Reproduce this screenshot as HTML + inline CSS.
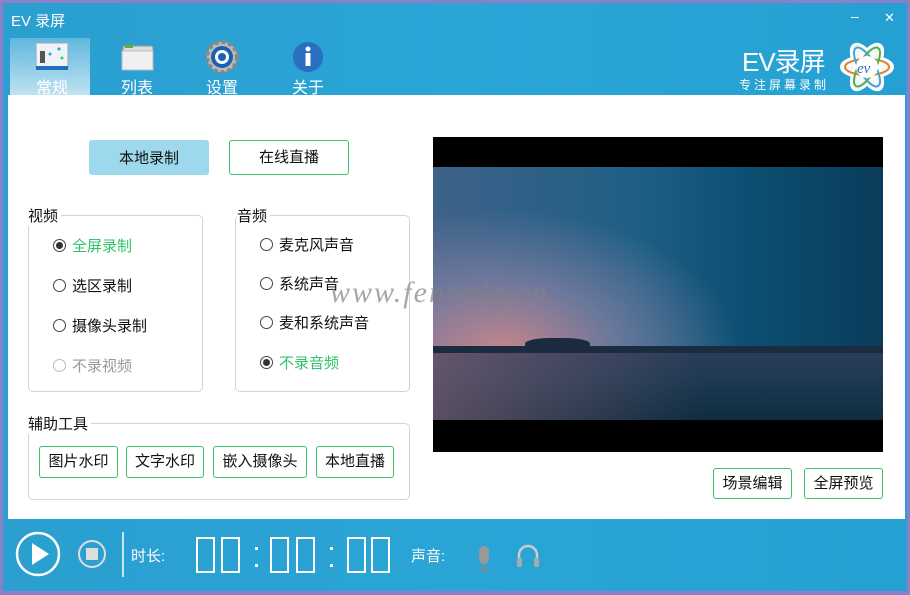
<!DOCTYPE html>
<html><head><meta charset="utf-8"><style>
*{margin:0;padding:0;box-sizing:border-box}
body{width:910px;height:595px;overflow:hidden;background:#8b7fc9;font-family:"Liberation Sans","Noto Sans CJK SC",sans-serif;position:relative}
.frame{position:absolute;left:3px;top:3px;width:904px;height:588px;background:linear-gradient(90deg,#2a9fd0,#2aa5d6 50%,#25a0d2)}
.abs{position:absolute}
.white{position:absolute;left:8px;top:95px;width:897px;height:424px;background:#fff}
.t{color:#fff}
.tab{position:absolute;top:38px;width:80px;height:57px;text-align:center;color:#fff;font-size:16px}
.tab span{position:absolute;left:0;right:0;top:36px}
.btn{position:absolute;border:1px solid #3cc36a;border-radius:3px;background:#fff;font-size:15px;text-align:center;color:#111}
.grp{position:absolute;border:1px solid #d4d4d4;border-radius:5px}
.lbl{position:absolute;background:#fff;font-size:15px;color:#111;padding-right:3px}
.rad{position:absolute;font-size:15px;color:#111;padding-left:19px}
.rad:before{content:"";position:absolute;left:0;top:4px;width:11px;height:11px;border:1px solid #444;border-radius:50%;background:#fff}
.rad.on:after{content:"";position:absolute;left:3px;top:7px;width:7px;height:7px;border-radius:50%;background:#333}
.g{color:#2fc46a}.d{color:#999}.d:before{border-color:#bbb}
</style></head><body>
<div class="frame"></div>
<div class="abs t" style="left:11px;top:10px;font-size:15px">EV 录屏</div>
<div class="abs t" style="left:851px;top:8px;font-size:14px">–</div>
<div class="abs t" style="left:884px;top:10px;font-size:13px">✕</div>
<div class="abs" style="left:10px;top:38px;width:80px;height:57px;background:linear-gradient(180deg,rgba(255,255,255,.25),rgba(255,255,255,.7))"></div>
<div class="tab" style="left:12px"><svg width="36" height="32" style="margin-top:3px"><rect x="2" y="2" width="32" height="25" fill="#eef3f6" stroke="#9ab" /><rect x="2" y="25" width="32" height="4" fill="#1f6fc0"/><rect x="6" y="10" width="5" height="12" fill="#555"/><circle cx="25" cy="8" r="1.5" fill="#39c"/><circle cx="16" cy="13" r="1.5" fill="#39c"/><circle cx="28" cy="17" r="1.5" fill="#3c6"/></svg><span>常规</span></div>
<div class="tab" style="left:97px"><svg width="36" height="32" style="margin-top:3px"><rect x="4" y="5" width="30" height="24" rx="2" fill="#ddd" stroke="#999"/><rect x="6" y="4" width="8" height="3" fill="#6a3"/><rect x="3" y="10" width="31" height="19" fill="#f0f0f0" stroke="#bbb"/></svg><span>列表</span></div>
<div class="tab" style="left:182px"><svg width="36" height="34" style="margin-top:2px"><circle cx="18" cy="17" r="15" fill="#bbb" stroke="#888" stroke-width="4" stroke-dasharray="4 3"/><circle cx="18" cy="17" r="11" fill="#1d5fb0"/><circle cx="18" cy="17" r="7" fill="#fff"/><circle cx="18" cy="17" r="4" fill="#1d5fb0"/></svg><span>设置</span></div>
<div class="tab" style="left:268px"><svg width="36" height="34" style="margin-top:2px"><circle cx="18" cy="17" r="15" fill="#2a6fc0"/><circle cx="18" cy="9" r="2.5" fill="#fff"/><rect x="15.5" y="13" width="5" height="13" fill="#fff"/></svg><span>关于</span></div>
<div class="abs t" style="left:742px;top:42px;font-size:26px;letter-spacing:-1px">EV录屏</div>
<div class="abs t" style="left:739px;top:76px;font-size:12px;letter-spacing:3px">专注屏幕录制</div>
<svg class="abs" style="left:838px;top:40px" width="58" height="54"><g fill="#f4f8f8" stroke="#fff" stroke-width="2"><ellipse cx="29" cy="27" rx="26" ry="11"/><ellipse cx="29" cy="27" rx="26" ry="11" transform="rotate(60 29 27)"/><ellipse cx="29" cy="27" rx="26" ry="11" transform="rotate(-60 29 27)"/></g><g fill="none" stroke-width="2"><ellipse cx="29" cy="27" rx="22" ry="8" stroke="#e08030"/><ellipse cx="29" cy="27" rx="22" ry="8" stroke="#40a8d0" transform="rotate(60 29 27)"/><ellipse cx="29" cy="27" rx="22" ry="8" stroke="#50b050" transform="rotate(-60 29 27)"/></g><circle cx="29" cy="27" r="11" fill="#fff"/><text x="19" y="33" font-size="15" font-style="italic" fill="#2a6fc0" font-family="Liberation Serif">ev</text></svg>
<div class="white"></div>
<div class="btn" style="left:89px;top:140px;width:120px;height:35px;line-height:35px;background:#9dd8ec;border-color:#9dd8ec">本地录制</div>
<div class="btn" style="left:229px;top:140px;width:120px;height:35px;line-height:33px">在线直播</div>
<div class="grp" style="left:28px;top:215px;width:175px;height:177px"></div>
<div class="lbl" style="left:28px;top:205px">视频</div>
<div class="rad on g" style="left:53px;top:235px">全屏录制</div>
<div class="rad" style="left:53px;top:275px">选区录制</div>
<div class="rad" style="left:53px;top:315px">摄像头录制</div>
<div class="rad d" style="left:53px;top:355px">不录视频</div>
<div class="grp" style="left:235px;top:215px;width:175px;height:177px"></div>
<div class="lbl" style="left:237px;top:205px">音频</div>
<div class="rad" style="left:260px;top:234px">麦克风声音</div>
<div class="rad" style="left:260px;top:273px">系统声音</div>
<div class="rad" style="left:260px;top:312px">麦和系统声音</div>
<div class="rad on g" style="left:260px;top:352px">不录音频</div>
<div class="grp" style="left:28px;top:423px;width:382px;height:77px"></div>
<div class="lbl" style="left:28px;top:413px">辅助工具</div>
<div class="btn" style="left:39px;top:446px;width:79px;height:32px;line-height:30px">图片水印</div>
<div class="btn" style="left:126px;top:446px;width:78px;height:32px;line-height:30px">文字水印</div>
<div class="btn" style="left:213px;top:446px;width:94px;height:32px;line-height:30px">嵌入摄像头</div>
<div class="btn" style="left:316px;top:446px;width:78px;height:32px;line-height:30px">本地直播</div>
<div class="abs" style="left:433px;top:137px;width:450px;height:315px;background:#000"></div>
<div class="abs" style="left:433px;top:167px;width:450px;height:185px;background:radial-gradient(ellipse 75% 110% at 15% 100%,rgba(205,135,140,.95),rgba(150,135,170,.6) 35%,rgba(100,120,160,0) 70%),linear-gradient(90deg,#3e6289,#1f5f84 45%,#0c4f72 70%,#0a3c5a)"></div>
<div class="abs" style="left:433px;top:352px;width:450px;height:68px;background:linear-gradient(90deg,rgba(140,100,120,.6),rgba(40,60,90,0) 60%),linear-gradient(180deg,#2a3c58,#1e3a52 40%,#0f2c40)"></div>
<div class="abs" style="left:433px;top:346px;width:450px;height:7px;background:#1b2b40"></div>
<div class="abs" style="left:525px;top:338px;width:65px;height:14px;background:#1b2a3e;border-radius:40% 40% 0 0"></div>
<div class="abs" style="left:330px;top:276px;font-family:'Liberation Serif',serif;font-style:italic;font-size:30px;color:rgba(130,130,130,.7);letter-spacing:2px">www.fenonlg.cn</div>
<div class="btn" style="left:713px;top:468px;width:79px;height:31px;line-height:29px">场景编辑</div>
<div class="btn" style="left:804px;top:468px;width:79px;height:31px;line-height:29px">全屏预览</div>
<svg class="abs" style="left:0;top:520px" width="560" height="70">
<circle cx="38" cy="34" r="21" fill="none" stroke="#fff" stroke-width="2.5"/><path d="M32 23 L49 34 L32 45Z" fill="#fff"/>
<circle cx="92" cy="34" r="13" fill="none" stroke="#ddd" stroke-width="2"/><rect x="86" y="28" width="12" height="12" fill="#ddd"/>
<line x1="123" y1="12" x2="123" y2="57" stroke="#fff" stroke-width="1.5"/>
<g fill="none" stroke="#fff" stroke-width="2">
<rect x="197" y="18" width="17" height="34"/><rect x="222" y="18" width="17" height="34"/>
<rect x="271" y="18" width="17" height="34"/><rect x="297" y="18" width="17" height="34"/>
<rect x="348" y="18" width="17" height="34"/><rect x="372" y="18" width="17" height="34"/></g>
<g fill="#fff"><rect x="255" y="27" width="3" height="3"/><rect x="255" y="44" width="3" height="3"/><rect x="330" y="27" width="3" height="3"/><rect x="330" y="44" width="3" height="3"/></g>
<rect x="479" y="26" width="10" height="18" rx="5" fill="#999"/><line x1="484" y1="44" x2="484" y2="50" stroke="#888" stroke-width="2"/><line x1="479" y1="50" x2="489" y2="50" stroke="#888" stroke-width="2"/>
<path d="M519 42 V35 A9 9 0 0 1 537 35 V42" fill="none" stroke="#ccc" stroke-width="2.5"/><rect x="517" y="38" width="5" height="9" rx="2" fill="#aaa"/><rect x="534" y="38" width="5" height="9" rx="2" fill="#aaa"/>
</svg>
<div class="abs t" style="left:131px;top:545px;font-size:15px">时长:</div>
<div class="abs t" style="left:411px;top:545px;font-size:15px">声音:</div>
</body></html>
